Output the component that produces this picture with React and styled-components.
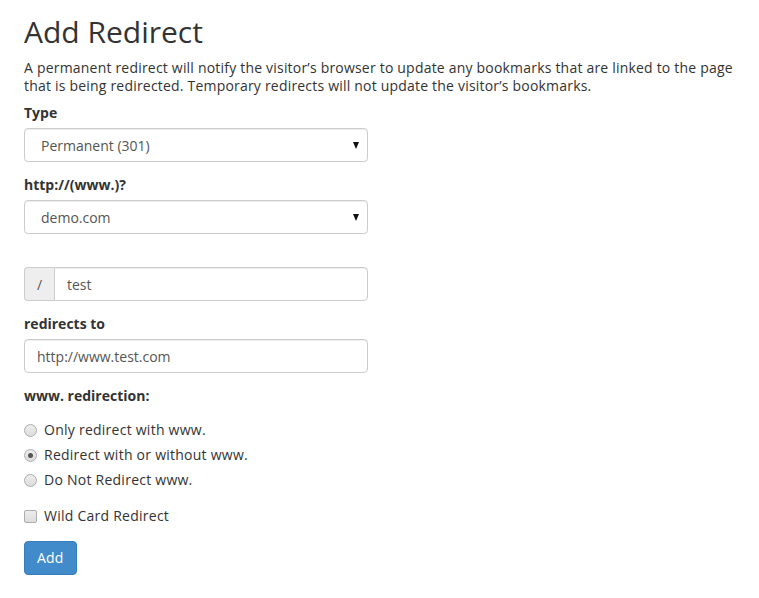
import styled, { createGlobalStyle } from 'styled-components'

const GlobalStyle = createGlobalStyle`
  html, body {
    margin: 0;
    padding: 0;
    background: #fff;
  }
  body {
    font-family: 'Open Sans', 'Liberation Sans', sans-serif;
    font-size: 14px;
    color: #333;
  }
  * {
    box-sizing: border-box;
  }
`

const Page = styled.div`
  padding: 15px 24px 20px;
`

const Title = styled.h1`
  margin: 0 0 11px;
  font-size: 30px;
  font-weight: 400;
  line-height: 33px;
  color: #333;
`

const Intro = styled.p`
  margin: 0 0 8px;
  line-height: 18px;
  letter-spacing: 0.2px;
`

const Form = styled.form`
  display: flex;
  flex-direction: column;
  align-items: flex-start;
`

const Field = styled.div`
  display: flex;
  flex-direction: column;
  width: 344px;
  margin-bottom: 13px;
  padding-top: ${p => p.$offset || 0}px;
`

const Label = styled.label`
  display: block;
  margin-bottom: 5px;
  font-weight: 700;
  line-height: 20px;
`

const controlBase = `
  width: 100%;
  height: 34px;
  border: 1px solid #ccc;
  border-radius: 4px;
  background: #fff;
  font-family: 'Open Sans', 'Liberation Sans', sans-serif;
  font-size: 14px;
  color: #555;
  box-shadow: inset 0 1px 1px rgba(0, 0, 0, 0.075);
`

const SelectWrap = styled.div`
  position: relative;
  width: 100%;

  &::after {
    content: '';
    position: absolute;
    right: 9px;
    top: 14px;
    border-left: 3.5px solid transparent;
    border-right: 3.5px solid transparent;
    border-top: 7px solid #111;
    pointer-events: none;
  }
`

const Select = styled.select`
  ${controlBase}
  appearance: none;
  padding: 6px 24px 6px 16px;
  outline: none;
`

const Input = styled.input`
  ${controlBase}
  padding: 6px 12px;
  outline: none;
`

const InputGroup = styled.div`
  display: flex;
  width: 100%;

  ${Input} {
    flex: 1;
    min-width: 0;
    border-top-left-radius: 0;
    border-bottom-left-radius: 0;
  }
`

const Addon = styled.span`
  display: flex;
  flex: none;
  align-items: center;
  justify-content: center;
  width: 30px;
  height: 34px;
  border: 1px solid #ccc;
  border-right: 0;
  border-radius: 4px 0 0 4px;
  background: #eee;
  color: #555;
`

const Options = styled.div`
  display: flex;
  flex-direction: column;
  gap: 5px;
  margin-top: 9px;
`

const Choice = styled.label`
  display: flex;
  align-items: center;
  gap: 7px;
  line-height: 20px;
  letter-spacing: 0.25px;
  cursor: pointer;
`

const RadioDot = styled.span`
  position: relative;
  flex: none;
  width: 13px;
  height: 13px;
  border: 1px solid #adadad;
  border-radius: 50%;
  background: linear-gradient(#ededed, #dcdcdc);

  &::after {
    content: '';
    display: ${p => (p.$checked ? 'block' : 'none')};
    position: absolute;
    left: 3px;
    top: 3px;
    width: 5px;
    height: 5px;
    border-radius: 50%;
    background: #555;
  }
`

const CheckBox = styled.span`
  flex: none;
  width: 13px;
  height: 13px;
  border: 1px solid #adadad;
  border-radius: 2px;
  background: linear-gradient(#ededed, #dcdcdc);
`

const WildCard = styled.div`
  margin: 3px 0 15px;
`

const Button = styled.button`
  height: 34px;
  padding: 6px 12px;
  border: 1px solid #357ebd;
  border-radius: 4px;
  background: #428bca;
  color: #fff;
  font-family: 'Open Sans', 'Liberation Sans', sans-serif;
  font-size: 14px;
  line-height: 20px;
  letter-spacing: 0.2px;
  cursor: pointer;
`

const wwwOptions = [
  { label: 'Only redirect with www.', checked: false },
  { label: 'Redirect with or without www.', checked: true },
  { label: 'Do Not Redirect www.', checked: false },
]

export default function App() {
  return (
    <Page>
      <GlobalStyle />
      <Title>Add Redirect</Title>
      <Intro>
        A permanent redirect will notify the visitor’s browser to update any bookmarks that are linked to the page
        that is being redirected. Temporary redirects will not update the visitor’s bookmarks.
      </Intro>
      <Form onSubmit={e => e.preventDefault()}>
        <Field>
          <Label>Type</Label>
          <SelectWrap>
            <Select defaultValue="301">
              <option value="301">Permanent (301)</option>
              <option value="302">Temporary (302)</option>
            </Select>
          </SelectWrap>
        </Field>
        <Field>
          <Label>http://(www.)?</Label>
          <SelectWrap>
            <Select defaultValue="demo.com">
              <option value="demo.com">demo.com</option>
            </Select>
          </SelectWrap>
        </Field>
        <Field $offset={20}>
          <InputGroup>
            <Addon>/</Addon>
            <Input defaultValue="test" />
          </InputGroup>
        </Field>
        <Field>
          <Label>redirects to</Label>
          <Input defaultValue="http://www.test.com" />
        </Field>
        <Field>
          <Label>www. redirection:</Label>
          <Options>
            {wwwOptions.map(opt => (
              <Choice key={opt.label}>
                <RadioDot $checked={opt.checked} />
                {opt.label}
              </Choice>
            ))}
          </Options>
        </Field>
        <WildCard>
          <Choice>
            <CheckBox />
            Wild Card Redirect
          </Choice>
        </WildCard>
        <Button type="submit">Add</Button>
      </Form>
    </Page>
  )
}
